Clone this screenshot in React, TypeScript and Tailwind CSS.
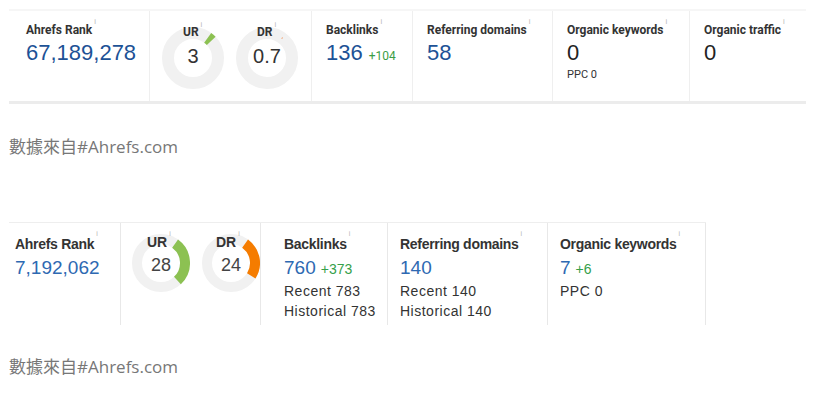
import React from "react";

function arcPath(cx: number, cy: number, r: number, a0: number, a1: number) {
    const rad = (a: number) => ((a - 90) * Math.PI) / 180;
    const x0 = cx + r * Math.cos(rad(a0));
    const y0 = cy + r * Math.sin(rad(a0));
    const x1 = cx + r * Math.cos(rad(a1));
    const y1 = cy + r * Math.sin(rad(a1));
    const large = a1 - a0 > 180 ? 1 : 0;
    return `M ${x0} ${y0} A ${r} ${r} 0 ${large} 1 ${x1} ${y1}`;
}

function Info() {
    return <sup className="ml-[2px] text-[7px] font-normal text-[#b5b5b5] align-top relative -top-[1px]">i</sup>;
}

function Gauge({
    label,
    value,
    pct,
    color,
    size,
    thick,
    labelCls,
    valueCls,
}: {
    label: string;
    value: string;
    pct: number;
    color: string;
    size: number;
    thick: number;
    labelCls: string;
    valueCls: string;
}) {
    const c = size / 2;
    const r = c - thick / 2;
    const start = 36;
    const end = start + Math.max((pct / 100) * 360, 1.2);
    return (
        <div className="relative" style={{ width: size, height: size }}>
            <svg width={size} height={size} className="block">
                <circle cx={c} cy={c} r={r} fill="none" stroke="#f1f1f1" strokeWidth={thick} />
                <path d={arcPath(c, c, r, start, end)} fill="none" stroke={color} strokeWidth={pct < 2 ? 1.5 : thick} />
            </svg>
            <div className={`absolute inset-0 flex items-center justify-center ${valueCls}`}>{value}</div>
            <div className={`absolute leading-none ${labelCls}`}>
                {label}
                <Info />
            </div>
        </div>
    );
}

export default function App() {
    return (
        <div className="bg-white w-[834px] h-[399px] pt-[9px] pl-[9px] overflow-hidden">
            {/* Widget 1 */}
            <div className="flex w-[797px] h-[95px] border-t-2 border-t-[#f6f6f6] border-b-[3px] border-b-[#ececec] font-['Roboto',sans-serif]">
                <div className="w-[141px] pl-[17px] pt-[12px] border-r border-[#efefef]">
                    <div className="text-[12px] font-bold text-[#333] leading-[14px]">Ahrefs Rank<Info /></div>
                    <div className="mt-[3px] text-[22px] text-[#1d5296] leading-[26px] font-['Liberation_Sans',sans-serif]">67,189,278</div>
                </div>
                <div className="w-[162px] flex items-start pt-[16px] pl-[12px] gap-[12px] border-r border-[#efefef]">
                    <Gauge label="UR" value="3" pct={3} color="#8cc152" size={62} thick={12}
                        labelCls="left-[20px] -top-[1px] text-[12px] font-bold text-[#333] px-[1px]"
                        valueCls="text-[20px] text-[#333] font-['Liberation_Sans',sans-serif] -mt-[4px]" />
                    <Gauge label="DR" value="0.7" pct={0.7} color="#f0a070" size={62} thick={12}
                        labelCls="left-[20px] -top-[1px] text-[12px] font-bold text-[#333] px-[1px]"
                        valueCls="text-[20px] text-[#333] font-['Liberation_Sans',sans-serif] -mt-[4px]" />
                </div>
                <div className="w-[101px] pl-[14px] pt-[12px] border-r border-[#efefef]">
                    <div className="text-[12px] font-bold text-[#333] leading-[14px]">Backlinks<Info /></div>
                    <div className="mt-[3px] flex items-baseline gap-[6px]">
                        <span className="text-[22px] text-[#1d5296] leading-[26px] font-['Liberation_Sans',sans-serif]">136</span>
                        <span className="text-[12px] text-[#3a9d45]">+104</span>
                    </div>
                </div>
                <div className="w-[140px] pl-[14px] pt-[12px] border-r border-[#efefef]">
                    <div className="text-[12px] font-bold text-[#333] leading-[14px]">Referring domains<Info /></div>
                    <div className="mt-[3px] text-[22px] text-[#1d5296] leading-[26px] font-['Liberation_Sans',sans-serif]">58</div>
                </div>
                <div className="w-[137px] pl-[14px] pt-[12px] border-r border-[#efefef]">
                    <div className="text-[12px] font-bold text-[#333] leading-[14px]">Organic keywords<Info /></div>
                    <div className="mt-[3px] text-[22px] text-[#222] leading-[26px] font-['Liberation_Sans',sans-serif]">0</div>
                    <div className="mt-[3px] text-[11px] text-[#333] leading-[12px]">PPC 0</div>
                </div>
                <div className="w-[116px] pl-[14px] pt-[12px]">
                    <div className="text-[12px] font-bold text-[#333] leading-[14px]">Organic traffic<Info /></div>
                    <div className="mt-[3px] text-[22px] text-[#222] leading-[26px] font-['Liberation_Sans',sans-serif]">0</div>
                </div>
            </div>

            <div className="mt-[31px] text-[17px] leading-[24px] text-[#777] font-['Open_Sans','Noto_Sans_CJK_TC',sans-serif]">數據來自#Ahrefs.com</div>

            {/* Widget 2 */}
            <div className="mt-[63px] flex w-[697px] h-[103px] border-t border-t-[#eeeeee] font-['Liberation_Sans',sans-serif]">
                <div className="w-[112px] pl-[6px] pt-[12px] border-r border-[#e8e8e8]">
                    <div className="text-[14px] font-bold text-[#333] leading-[18px] tracking-[-0.3px]">Ahrefs Rank<Info /></div>
                    <div className="mt-[3px] text-[19px] text-[#2e69b2] leading-[24px]">7,192,062</div>
                </div>
                <div className="w-[140px] flex items-start pt-[11px] pl-[11px] gap-[12px] border-r border-[#e8e8e8]">
                    <Gauge label="UR" value="28" pct={28} color="#8cc152" size={58} thick={10}
                        labelCls="left-[15px] top-[1px] text-[14px] font-bold text-[#333]"
                        valueCls="text-[18px] text-[#444] mt-[4px]" />
                    <Gauge label="DR" value="24" pct={24} color="#f57c00" size={58} thick={10}
                        labelCls="left-[14px] top-[1px] text-[14px] font-bold text-[#333]"
                        valueCls="text-[18px] text-[#444] mt-[4px]" />
                </div>
                <div className="w-[127px] pl-[23px] pt-[12px] border-r border-[#e8e8e8]">
                    <div className="text-[14px] font-bold text-[#333] leading-[18px] tracking-[-0.3px]">Backlinks<Info /></div>
                    <div className="mt-[3px] flex items-baseline gap-[5px]">
                        <span className="text-[19px] text-[#2e69b2] leading-[24px]">760</span>
                        <span className="text-[14px] text-[#35a04a]">+373</span>
                    </div>
                    <div className="text-[14px] text-[#333] leading-[20px] tracking-[0.5px] mt-[1px]">Recent 783</div>
                    <div className="text-[14px] text-[#333] leading-[20px] tracking-[0.5px]">Historical 783</div>
                </div>
                <div className="w-[160px] pl-[12px] pt-[12px] border-r border-[#e8e8e8]">
                    <div className="text-[14px] font-bold text-[#333] leading-[18px] tracking-[-0.3px]">Referring domains<Info /></div>
                    <div className="mt-[3px] text-[19px] text-[#2e69b2] leading-[24px]">140</div>
                    <div className="text-[14px] text-[#333] leading-[20px] tracking-[0.5px] mt-[1px]">Recent 140</div>
                    <div className="text-[14px] text-[#333] leading-[20px] tracking-[0.5px]">Historical 140</div>
                </div>
                <div className="w-[158px] pl-[12px] pt-[12px] border-r border-[#e8e8e8]">
                    <div className="text-[14px] font-bold text-[#333] leading-[18px] tracking-[-0.3px]">Organic keywords<Info /></div>
                    <div className="mt-[3px] flex items-baseline gap-[5px]">
                        <span className="text-[19px] text-[#2e69b2] leading-[24px]">7</span>
                        <span className="text-[14px] text-[#35a04a]">+6</span>
                    </div>
                    <div className="text-[14px] text-[#333] leading-[20px] tracking-[0.5px] mt-[1px]">PPC 0</div>
                </div>
            </div>

            <div className="mt-[30px] text-[17px] leading-[24px] text-[#777] font-['Open_Sans','Noto_Sans_CJK_TC',sans-serif]">數據來自#Ahrefs.com</div>
        </div>
    );
}
